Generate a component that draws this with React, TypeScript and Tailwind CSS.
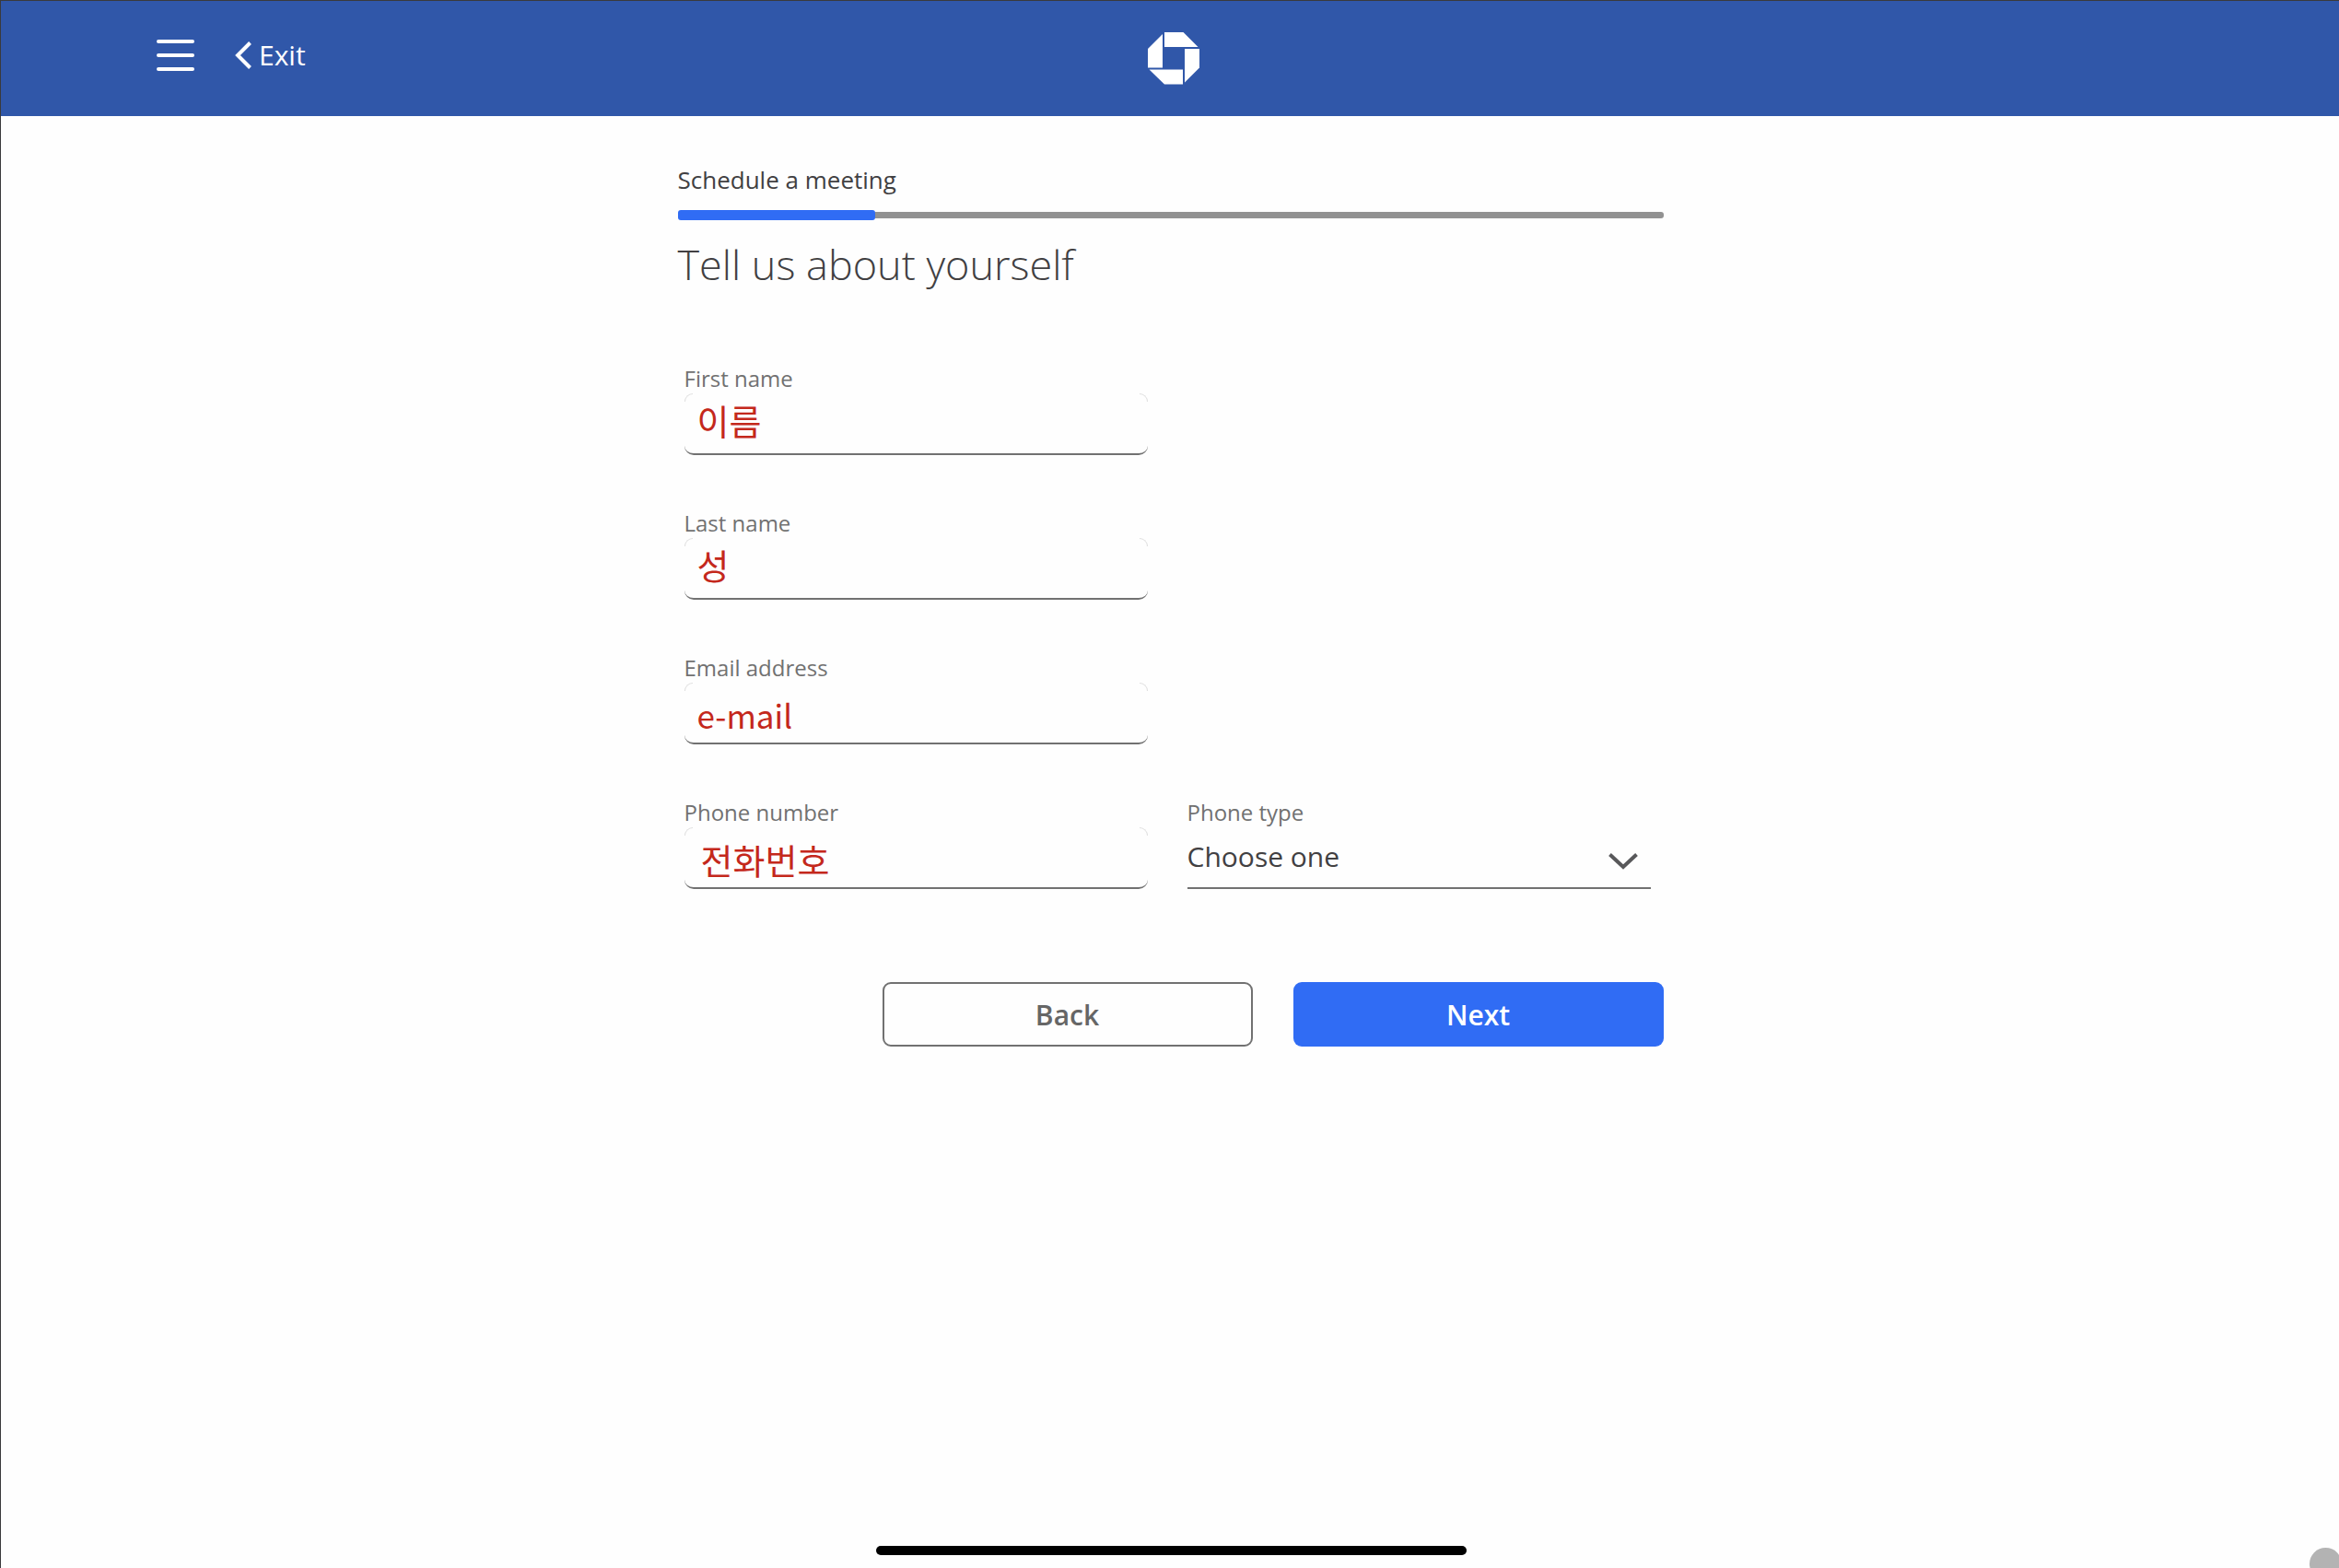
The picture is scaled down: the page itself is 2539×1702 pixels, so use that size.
import React from "react";

type TextFieldProps = {
  id: string;
  label: string;
  value: string;
  type?: string;
  inputClass: string;
};

function TextField({ id, label, value, type = "text", inputClass }: TextFieldProps) {
  return (
    <div className="col-start-1 flex flex-col">
      <label htmlFor={id} className="pb-px text-[24px] leading-[31px] text-[#717171]">
        {label}
      </label>
      <div className="relative">
        <span className="absolute top-0 left-0 size-[9px] rounded-tl-[9px] border-t border-l border-[#dedede]" />
        <span className="absolute top-0 right-0 size-[9px] rounded-tr-[9px] border-t border-r border-[#dedede]" />
        <input
          id={id}
          type={type}
          defaultValue={value}
          className={
            "block h-[67px] w-full rounded-b-[10px] border-b-2 border-[#717171] bg-transparent font-['Noto_Sans_CJK_KR',sans-serif] text-[#c4281c] outline-none " +
            inputClass
          }
        />
      </div>
    </div>
  );
}

function Logo() {
  return (
    <svg viewBox="0 0 56 57" className="h-[57px] w-14" fill="#fff" role="img" aria-label="Home">
      <path d="M18 0H38.500L54.500 16H18Z" />
      <path d="M56 18V38.500L40 54.500V18Z" />
      <path d="M38 56.500H18L1.500 40.500H38Z" />
      <path d="M0 38.500V18L16 2V38.500Z" />
    </svg>
  );
}

export default function App() {
  return (
    <div className="relative min-h-screen overflow-hidden border-t border-l border-[#3a3a3c] bg-[#fefefe] font-['Open_Sans',sans-serif]">
      <header className="grid h-[125px] grid-cols-[1fr_auto_1fr] items-center bg-[#3057a9] pl-[7px] text-white">
        <nav className="flex items-center gap-11 pb-2 pl-[162px]">
          <button type="button" aria-label="Menu" className="flex w-[41px] flex-col gap-[11px]">
            <span className="h-1 rounded-full bg-white" />
            <span className="h-1 rounded-full bg-white" />
            <span className="h-1 rounded-full bg-white" />
          </button>
          <a href="#exit" className="flex items-center gap-2 text-[30px] leading-10">
            <svg viewBox="0 0 18 30" className="h-[30px] w-[18px]" fill="none" stroke="#fff" strokeWidth="4">
              <path d="M16.500 1.500L3 15L16.500 28.500" />
            </svg>
            Exit
          </a>
        </nav>
        <Logo />
      </header>

      <main className="mx-auto w-full max-w-[1071px] pt-[53px] pl-px text-[#414042]">
        <p className="text-[26px] leading-8">Schedule a meeting</p>
        <div
          role="progressbar"
          aria-label="Schedule a meeting"
          aria-valuenow={20}
          className="mt-[17px] flex h-[11px] items-center"
        >
          <div className="h-full w-1/5 rounded-[3px] bg-[#306cf4]" />
          <div className="h-[7px] flex-1 rounded-r-[3px] bg-[#929292]" />
        </div>
        <h1 className="mt-6 text-[45px] leading-[48px] font-light">Tell us about yourself</h1>

        <form onSubmit={(e) => e.preventDefault()}>
          <div className="mt-[84px] grid grid-cols-2 gap-x-[43px] gap-y-[58px] pr-[14px] pl-[7px]">
            <TextField id="first" label="First name" value="이름" inputClass="px-[14px] pb-2 text-[38px]" />
            <TextField id="last" label="Last name" value="성" inputClass="px-[14px] pb-2 text-[38px]" />
            <TextField id="email" label="Email address" value="e-mail" inputClass="px-[14px] pt-1 text-[35px]" />
            <TextField
              id="phone"
              label="Phone number"
              value="전화번호"
              type="tel"
              inputClass="px-[18px] pt-1 text-[38px]"
            />
            <div className="flex flex-col">
              <label htmlFor="phone-type" className="pb-px text-[24px] leading-[31px] text-[#717171]">
                Phone type
              </label>
              <div className="relative">
                <select
                  id="phone-type"
                  className="block h-[67px] w-full appearance-none border-b-2 border-[#717171] bg-transparent pb-0.5 text-[30px] outline-none"
                >
                  <option>Choose one</option>
                </select>
                <svg
                  viewBox="0 0 32 18"
                  className="pointer-events-none absolute top-7 right-[14px] h-[18px] w-8"
                  fill="none"
                  stroke="#58585a"
                  strokeWidth="4"
                >
                  <path d="M1.500 1.500L16 15L30.500 1.500" />
                </svg>
              </div>
            </div>
          </div>

          <div className="mt-[101px] flex justify-end gap-11">
            <button
              type="button"
              className="h-[70px] w-[402px] rounded-[9px] border-2 border-[#717171] text-[30px] font-semibold text-[#666666]"
            >
              Back
            </button>
            <button
              type="submit"
              className="h-[70px] w-[402px] rounded-[9px] bg-[#306cf4] text-[30px] font-semibold text-white"
            >
              Next
            </button>
          </div>
        </form>
      </main>

      <div className="absolute inset-x-0 bottom-[14px] flex justify-center pl-[3px]">
        <div className="h-[10px] w-[641px] rounded-full bg-black" />
      </div>
      <div className="absolute -right-[3px] -bottom-[13px] size-[35px] rounded-full bg-[#b3b3b3]" />
    </div>
  );
}
